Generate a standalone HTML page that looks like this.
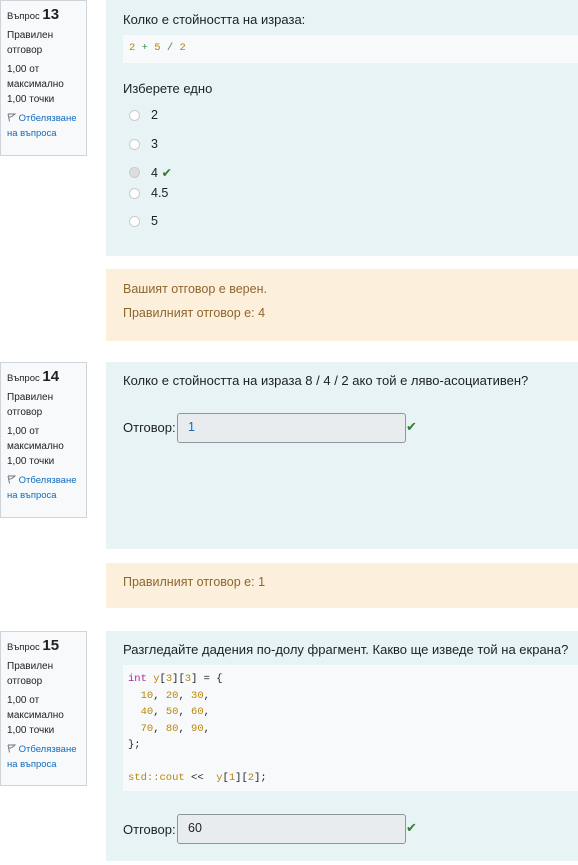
<!DOCTYPE html>
<html><head><meta charset="utf-8"><style>
*{margin:0;padding:0;box-sizing:border-box}
body{width:578px;height:865px;background:#fff;font-family:"Liberation Sans","DejaVu Sans",sans-serif;color:#1d2125;position:relative;overflow:hidden}
.a{position:absolute}
.info{background:#f8f9fa;border:1px solid #cfd4da;width:87px;padding:6px 6px;font-size:10px;line-height:15px;color:#1d2125;overflow:hidden}
.info .n{font-size:9.5px}.info .n b{font-size:15px}
.info p{margin-top:4px}
.info a{color:#0f6cbf;font-size:9.5px;white-space:nowrap}
.panel{background:#e7f3f5;left:106px;width:472px}
.fb{background:#fcefdc;left:106px;width:472px;color:#8e662e;font-size:12.5px}
.t{font-size:13px;color:#1d2125}
.code{background:#f8f9fa;font-family:"Liberation Mono","DejaVu Sans Mono",monospace;font-size:10.5px;color:#b8860b}
.r{width:11px;height:11px;border:1px solid #ccc;border-radius:50%;background:#fff;position:absolute;left:129px}
.opt{position:absolute;left:151px;font-size:12.5px}
.inp{position:absolute;border:1px solid #8f959e;border-radius:3px;background:#e9ecef;font-size:12.5px;color:#1d2125;padding:6px 10px;width:229px;height:30px}
.ck{color:#357a32;font-size:13px;position:absolute;font-weight:bold}
</style></head><body>

<div class="a info" style="left:0;top:0;height:156px">
<div class="n">Въпрос <b>13</b></div>
<p>Правилен<br>отговор</p>
<p>1,00 от<br>максимално<br>1,00 точки</p>
<p><a><svg width="9" height="9" viewBox="0 0 9 9" style="vertical-align:-1px"><path d="M1 1 L8 1 L5 3.5 L3 4 L1.5 4 M1 1 L2.5 8.5" fill="none" stroke="#6a737b" stroke-width="0.9"/></svg> Отбелязване</a><br><a>на въпроса</a></p>
</div>
<div class="a panel" style="top:0;height:256px"></div>
<div class="a t" style="left:123px;top:12px">Колко е стойността на израза:</div>
<div class="a code" style="left:123px;top:35px;width:455px;height:28px;padding:7px 6px">2 <span style="color:#2e8b57">+</span> 5 <span style="color:#2e8b57">/</span> 2</div>
<div class="a t" style="left:123px;top:81px">Изберете едно</div>
<div class="r" style="top:110px"></div><div class="opt" style="top:108px">2</div>
<div class="r" style="top:139px"></div><div class="opt" style="top:137px">3</div>
<div class="r" style="top:167px;background:#ddd"></div><div class="opt" style="top:165px">4 <span style="color:#357a32;font-weight:bold">✔</span></div>
<div class="r" style="top:188px"></div><div class="opt" style="top:186px">4.5</div>
<div class="r" style="top:216px"></div><div class="opt" style="top:214px">5</div>

<div class="a fb" style="top:269px;height:72px"><div style="position:absolute;left:17px;top:13px">Вашият отговор е верен.</div><div style="position:absolute;left:17px;top:37px">Правилният отговор е: 4</div></div>

<div class="a info" style="left:0;top:362px;height:156px">
<div class="n">Въпрос <b>14</b></div>
<p>Правилен<br>отговор</p>
<p>1,00 от<br>максимално<br>1,00 точки</p>
<p><a><svg width="9" height="9" viewBox="0 0 9 9" style="vertical-align:-1px"><path d="M1 1 L8 1 L5 3.5 L3 4 L1.5 4 M1 1 L2.5 8.5" fill="none" stroke="#6a737b" stroke-width="0.9"/></svg> Отбелязване</a><br><a>на въпроса</a></p>
</div>
<div class="a panel" style="top:362px;height:187px"></div>
<div class="a t" style="left:123px;top:373px">Колко е стойността на израза 8 / 4 / 2 ако той е ляво-асоциативен?</div>
<div class="a t" style="left:123px;top:420px">Отговор:</div>
<div class="inp" style="left:177px;top:413px;color:#0f6cbf">1</div>
<div class="ck" style="left:406px;top:419px">✔</div>

<div class="a fb" style="top:563px;height:45px"><div style="position:absolute;left:17px;top:12px">Правилният отговор е: 1</div></div>

<div class="a info" style="left:0;top:631px;height:155px">
<div class="n">Въпрос <b>15</b></div>
<p>Правилен<br>отговор</p>
<p>1,00 от<br>максимално<br>1,00 точки</p>
<p><a><svg width="9" height="9" viewBox="0 0 9 9" style="vertical-align:-1px"><path d="M1 1 L8 1 L5 3.5 L3 4 L1.5 4 M1 1 L2.5 8.5" fill="none" stroke="#6a737b" stroke-width="0.9"/></svg> Отбелязване</a><br><a>на въпроса</a></p>
</div>
<div class="a panel" style="top:631px;height:230px"></div>
<div class="a t" style="left:123px;top:642px">Разгледайте дадения по-долу фрагмент. Какво ще изведе той на екрана?</div>
<pre class="a code" style="left:123px;top:665px;width:455px;height:126px;padding:6px 5px;line-height:16.5px;color:#1d2125"><span style="color:#a626a4">int</span> <span style="color:#b8860b">y</span>[<span style="color:#b8860b">3</span>][<span style="color:#b8860b">3</span>] = {
  <span style="color:#b8860b">10</span>, <span style="color:#b8860b">20</span>, <span style="color:#b8860b">30</span>,
  <span style="color:#b8860b">40</span>, <span style="color:#b8860b">50</span>, <span style="color:#b8860b">60</span>,
  <span style="color:#b8860b">70</span>, <span style="color:#b8860b">80</span>, <span style="color:#b8860b">90</span>,
};

<span style="color:#b8860b">std::cout</span> &lt;&lt;  <span style="color:#b8860b">y</span>[<span style="color:#b8860b">1</span>][<span style="color:#b8860b">2</span>];</pre>
<div class="a t" style="left:123px;top:822px">Отговор:</div>
<div class="inp" style="left:177px;top:814px">60</div>
<div class="ck" style="left:406px;top:820px">✔</div>
</body></html>
